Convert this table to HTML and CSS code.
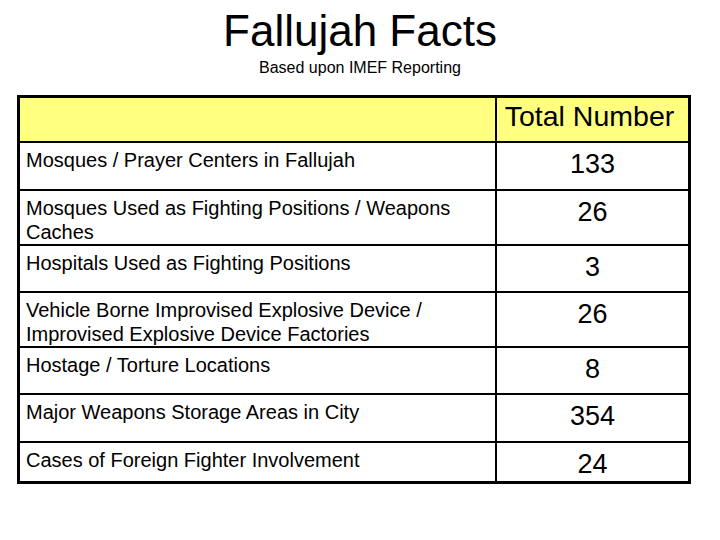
FILE: index.html
```html
<!DOCTYPE html>
<html lang="en">
<head>
<meta charset="utf-8">
<title>Fallujah Facts</title>
<link rel="stylesheet" href="styles.css">
</head>
<body>
<main class="slide">
  <header class="heading">
    <h1 class="title">Fallujah Facts</h1>
    <p class="subtitle">Based upon IMEF Reporting</p>
  </header>
  <section class="facts">
    <div class="row head h43">
      <div class="label"></div>
      <div class="num head-num">Total Number</div>
    </div>
    <div class="row h46">
      <div class="label">Mosques / Prayer Centers in Fallujah</div>
      <div class="num">133</div>
    </div>
    <div class="row h53">
      <div class="label">Mosques Used as Fighting Positions / Weapons Caches</div>
      <div class="num">26</div>
    </div>
    <div class="row h45">
      <div class="label">Hospitals Used as Fighting Positions</div>
      <div class="num">3</div>
    </div>
    <div class="row h53">
      <div class="label">Vehicle Borne Improvised Explosive Device / Improvised Explosive Device Factories</div>
      <div class="num">26</div>
    </div>
    <div class="row h45">
      <div class="label">Hostage / Torture Locations</div>
      <div class="num">8</div>
    </div>
    <div class="row h46">
      <div class="label">Major Weapons Storage Areas in City</div>
      <div class="num">354</div>
    </div>
    <div class="row h38">
      <div class="label">Cases of Foreign Fighter Involvement</div>
      <div class="num">24</div>
    </div>
  </section>
</main>
</body>
</html>
```

FILE: styles.css
```css
html, body {
  margin: 0;
  padding: 0;
  background: #ffffff;
}
body {
  width: 720px;
  height: 540px;
  overflow: hidden;
  font-family: "Liberation Sans", Arial, sans-serif;
  color: #000000;
}
.slide {
  padding-top: 9px;
}
.heading {
  text-align: center;
}
.title {
  margin: 0;
  font-weight: normal;
  font-size: 44px;
  line-height: 44px;
}
.subtitle {
  margin: 6px 0 0;
  font-size: 16px;
  line-height: 18px;
}
.facts {
  margin: 18px 0 0 17px;
  width: 668px;
  border: 3px solid #000000;
}
.row {
  display: grid;
  grid-template-columns: 477px 1fr;
  border-top: 2px solid #000000;
}
.row.head {
  border-top: none;
  background: #ffff80;
}
.h43 { height: 43px; }
.h46 { height: 46px; }
.h53 { height: 53px; }
.h45 { height: 45px; }
.h38 { height: 38px; }
.label {
  border-right: 2px solid #000000;
  padding: 5px 20px 0 6px;
  font-size: 20px;
  line-height: 24px;
}
.num {
  text-align: center;
  padding-top: 6px;
  font-size: 27px;
  line-height: 30px;
}
.head-num {
  padding: 2px 6px 0 0;
  font-size: 28.5px;
  line-height: 32px;
}
```
